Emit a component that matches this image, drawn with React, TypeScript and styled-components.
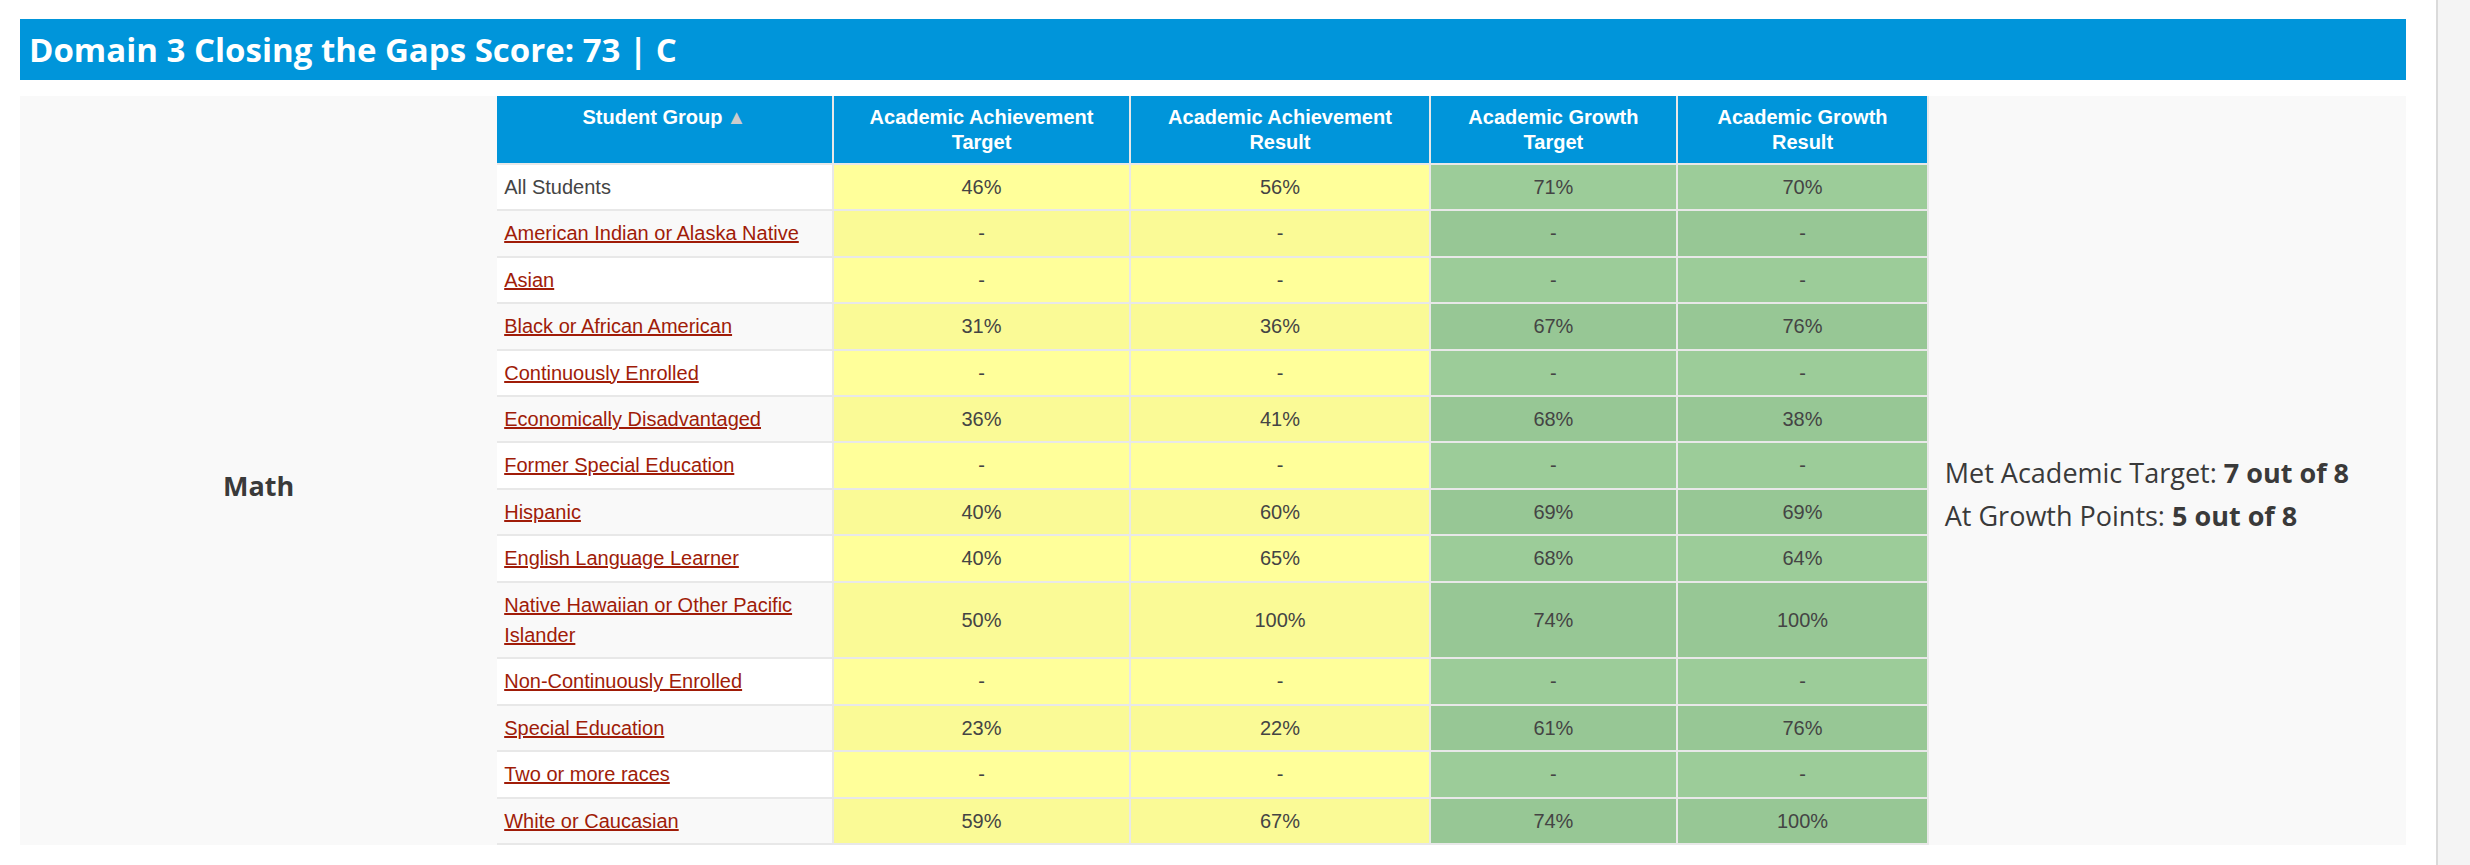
import styled, { createGlobalStyle } from 'styled-components'

const GlobalStyle = createGlobalStyle`
    html, body {
        margin: 0;
        padding: 0;
        background: #ffffff;
    }
`

const Page = styled.div`
    display: flex;
    height: 865px;
    overflow: hidden;
`

const Main = styled.div`
    flex: 1;
    padding: 19px 30px 0 20px;
`

const ScrollTrack = styled.div`
    width: 32px;
    border-left: 2px solid #dadada;
    background: #f4f4f4;
`

const TitleBar = styled.div`
    height: 61px;
    display: flex;
    align-items: center;
    padding-left: 9px;
    background: #0095da;
    color: #ffffff;
    font-family: 'Open Sans', sans-serif;
    font-weight: 700;
    font-size: 33px;
`

const Panel = styled.div`
    margin-top: 16px;
    display: grid;
    grid-template-columns: 20% 60% 20%;
    background: #f9f9f9;
`

const SubjectCell = styled.div`
    display: flex;
    align-items: center;
    justify-content: center;
    padding-top: 30px;
    font-family: 'Open Sans', sans-serif;
    font-weight: 700;
    font-size: 27px;
    color: #3a3a3a;
`

const Summary = styled.div`
    display: flex;
    flex-direction: column;
    justify-content: center;
    padding: 46px 0 0 16px;
    font-family: 'Open Sans', sans-serif;
    font-size: 27px;
    line-height: 43px;
    color: #3a3a3a;

    b {
        font-weight: 700;
    }
`

const Table = styled.table`
    width: 100%;
    border-collapse: separate;
    border-spacing: 0;
    table-layout: fixed;
    font-family: 'Liberation Sans', Arial, sans-serif;
    font-size: 20px;
`

const Th = styled.th`
    background: #0095da;
    color: #ffffff;
    font-weight: 700;
    line-height: 25px;
    padding: 9px 10px 8px;
    vertical-align: top;
    text-align: center;
    border-right: 2px solid #e8e8e8;
    border-bottom: 2px solid #e8e8e8;
`

const SortArrow = styled.span`
    color: #cccccc;
    margin-left: 4px;
`

type Tone = 'plain' | 'yellow' | 'green'

const tones: Record<Tone, [string, string]> = {
    plain: ['#ffffff', '#f9f9f9'],
    yellow: ['#ffff9a', '#fafa96'],
    green: ['#9ccc99', '#97c795'],
}

const Td = styled.td<{ $tone: Tone; $striped: boolean }>`
    background: ${p => tones[p.$tone][p.$striped ? 1 : 0]};
    color: #444444;
    line-height: 30.4px;
    padding: 7px 7px;
    text-align: ${p => (p.$tone === 'plain' ? 'left' : 'center')};
    vertical-align: middle;
    border-right: 2px solid #e8e8e8;
    border-bottom: 2px solid #e8e8e8;
`

const GroupLink = styled.a`
    color: #a01c08;
    text-decoration: underline;
`

const rows = [
    { group: 'All Students', link: false, vals: ['46%', '56%', '71%', '70%'] },
    { group: 'American Indian or Alaska Native', link: true, vals: ['-', '-', '-', '-'] },
    { group: 'Asian', link: true, vals: ['-', '-', '-', '-'] },
    { group: 'Black or African American', link: true, vals: ['31%', '36%', '67%', '76%'] },
    { group: 'Continuously Enrolled', link: true, vals: ['-', '-', '-', '-'] },
    { group: 'Economically Disadvantaged', link: true, vals: ['36%', '41%', '68%', '38%'] },
    { group: 'Former Special Education', link: true, vals: ['-', '-', '-', '-'] },
    { group: 'Hispanic', link: true, vals: ['40%', '60%', '69%', '69%'] },
    { group: 'English Language Learner', link: true, vals: ['40%', '65%', '68%', '64%'] },
    { group: 'Native Hawaiian or Other Pacific Islander', link: true, vals: ['50%', '100%', '74%', '100%'] },
    { group: 'Non-Continuously Enrolled', link: true, vals: ['-', '-', '-', '-'] },
    { group: 'Special Education', link: true, vals: ['23%', '22%', '61%', '76%'] },
    { group: 'Two or more races', link: true, vals: ['-', '-', '-', '-'] },
    { group: 'White or Caucasian', link: true, vals: ['59%', '67%', '74%', '100%'] },
]

const valueTones: Tone[] = ['yellow', 'yellow', 'green', 'green']

const App = () => {
    return (
        <Page>
            <GlobalStyle />
            <Main>
                <TitleBar>Domain 3 Closing the Gaps Score: 73 | C</TitleBar>
                <Panel>
                    <SubjectCell>Math</SubjectCell>
                    <Table>
                        <colgroup>
                            <col style={{ width: '23.5%' }} />
                            <col style={{ width: '20.8%' }} />
                            <col style={{ width: '20.9%' }} />
                            <col style={{ width: '17.3%' }} />
                            <col style={{ width: '17.5%' }} />
                        </colgroup>
                        <thead>
                            <tr>
                                <Th>Student Group<SortArrow>▲</SortArrow></Th>
                                <Th>Academic Achievement Target</Th>
                                <Th>Academic Achievement Result</Th>
                                <Th>Academic Growth Target</Th>
                                <Th>Academic Growth Result</Th>
                            </tr>
                        </thead>
                        <tbody>
                            {rows.map((row, i) =>
                                <tr key={row.group}>
                                    <Td $tone="plain" $striped={i % 2 === 1}>
                                        {row.link ? <GroupLink href="#">{row.group}</GroupLink> : row.group}
                                    </Td>
                                    {row.vals.map((v, j) =>
                                        <Td key={j} $tone={valueTones[j]} $striped={i % 2 === 1}>{v}</Td>
                                    )}
                                </tr>
                            )}
                        </tbody>
                    </Table>
                    <Summary>
                        <div>Met Academic Target: <b>7 out of 8</b></div>
                        <div>At Growth Points: <b>5 out of 8</b></div>
                    </Summary>
                </Panel>
            </Main>
            <ScrollTrack />
        </Page>
    )
}

export default App
